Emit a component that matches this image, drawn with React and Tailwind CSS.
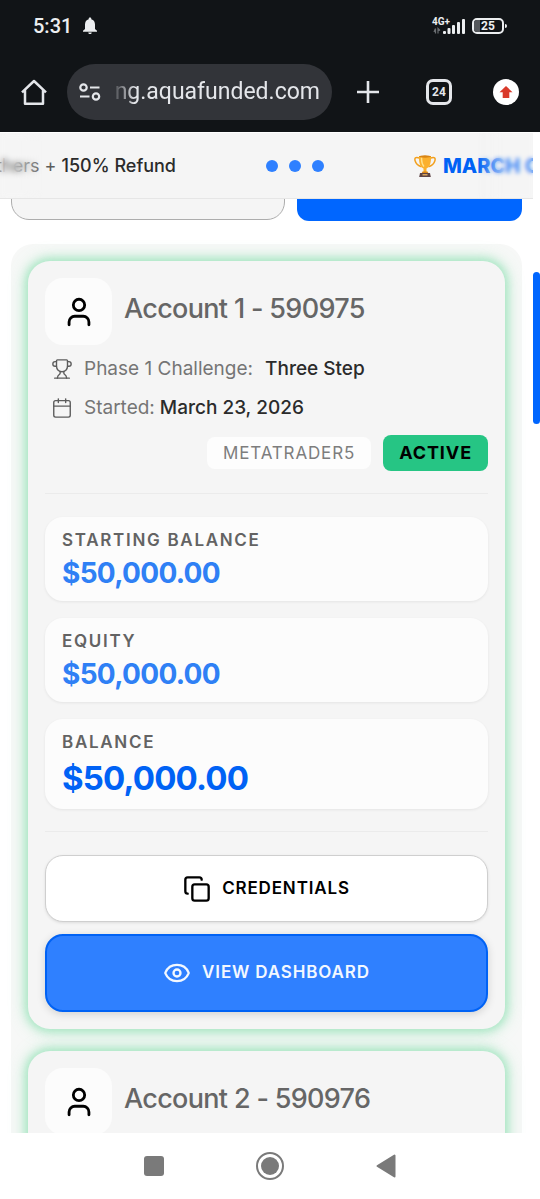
import { useState } from "react";
import { Calendar, Copy, Eye, Trophy, User } from "lucide-react";

const accounts = [
  {
    id: 1,
    login: "590975",
    challenge: "Three Step",
    started: "March 23, 2026",
    platform: "METATRADER5",
    status: "ACTIVE",
    startingBalance: "$50,000.00",
    equity: "$50,000.00",
    balance: "$50,000.00",
  },
  {
    id: 2,
    login: "590976",
    challenge: "Three Step",
    started: "March 23, 2026",
    platform: "METATRADER5",
    status: "ACTIVE",
    startingBalance: "$50,000.00",
    equity: "$50,000.00",
    balance: "$50,000.00",
  },
];

function StatusBar() {
  return (
    <div className="flex h-[52px] items-center justify-between px-[33px] text-[#eceef0]">
      <div className="flex items-center gap-[10px]">
        <span className="text-xl font-medium">5:31</span>
        <svg className="h-[18px] w-4" viewBox="0 0 16 18" fill="currentColor">
          <path d="M8 0.5c.8 0 1.3.5 1.3 1.2v.6C11.700 2.900 13 4.900 13 7.500v4.500l2 1.700v1H1v-1L3 12V7.500c0-2.600 1.300-4.600 3.700-5.200v-.6C6.700 1 7.200.5 8 .5z" />
          <path d="M6.300 15.400h3.400c0 .9-.7 1.600-1.700 1.600s-1.700-.7-1.700-1.600z" />
        </svg>
      </div>
      <div className="flex items-center gap-[7px]">
        {/* Mobile signal */}
        <div className="relative">
          <svg className="h-[18px] w-[33px]" viewBox="0 0 33 18" fill="currentColor">
            <path d="M3.500 11.500v5M2 15l1.500-3.500M6 16.500v-5l2 2" stroke="#6b6e72" strokeWidth="1.200" fill="none" />
            <rect x="11" y="14" width="3" height="3" rx="1" />
            <rect x="15.500" y="11" width="3" height="6" rx="1" />
            <rect x="20" y="8" width="3" height="9" rx="1" />
            <rect x="25" y="5" width="3" height="12" rx="1" />
            <rect x="30" y="2" width="3" height="15" rx="1" />
          </svg>
          <span className="absolute left-0 top-0 text-[10px] font-bold leading-none">4G+</span>
        </div>
        {/* Battery */}
        <div className="flex items-center gap-px">
          <div className="relative flex h-4 w-8 items-center justify-center overflow-hidden rounded-[5px] border-2 border-current">
            <span className="absolute inset-y-0 left-0 w-[6px] bg-[#55585c]" />
            <span className="relative text-xs font-bold leading-none">25</span>
          </div>
          <span className="h-1 w-[2px] rounded-r-sm bg-current" />
        </div>
      </div>
    </div>
  );
}

function BrowserBar() {
  return (
    <div className="flex h-20 items-center pl-5 pr-[21px] text-[#e4e6ea]">
      <button aria-label="Home" className="shrink-0">
        <svg className="h-7 w-7" viewBox="0 0 28 28" fill="none" stroke="currentColor" strokeWidth="2.500">
          <path d="M2 14.300 14 3l12 11.300M5 12v13.700h18V12" strokeLinejoin="round" />
        </svg>
      </button>
      <div className="ml-[19px] flex h-14 min-w-0 flex-1 items-center rounded-full bg-[#323439] px-3">
        <svg className="h-6 w-6 shrink-0" viewBox="0 0 24 24" fill="none" stroke="currentColor" strokeWidth="2.200">
          <circle cx="4.500" cy="7.500" r="3.200" />
          <path d="M11 7.500h9.500M1 16.500h9.500" />
          <circle cx="17" cy="16.500" r="3.200" />
        </svg>
        <input
          type="text"
          aria-label="Address"
          readOnly
          value="ng.aquafunded.com"
          className="ml-2 min-w-0 flex-1 bg-transparent text-right text-[23px] outline-none [mask-image:linear-gradient(to_right,transparent,black_24px)]"
        />
      </div>
      <button aria-label="New tab" className="ml-6 shrink-0">
        <svg className="h-6 w-6" viewBox="0 0 24 24" fill="none" stroke="currentColor" strokeWidth="2.600">
          <path d="M12 1v22M1 12h22" />
        </svg>
      </button>
      <button
        aria-label="Tabs"
        className="ml-[46px] flex h-[26px] w-[26px] shrink-0 items-center justify-center rounded-[7px] border-3 border-current text-xs font-bold"
      >
        24
      </button>
      <button
        aria-label="Update available"
        className="ml-[41px] flex h-[26px] w-[26px] shrink-0 items-center justify-center rounded-full bg-white"
      >
        <svg className="h-[14px] w-[14px]" viewBox="0 0 14 14" fill="#d93a2b">
          <path d="M7 1l6.500 6.200h-3.200V13H3.700V7.200H.5z" />
        </svg>
      </button>
    </div>
  );
}

function TrophyEmoji() {
  return (
    <svg className="h-[22px] w-[22px] shrink-0" viewBox="0 0 22 22">
      <path d="M5.500 3C1.500 1.500.2 3 1.200 6c.8 3 3.200 4.800 6.300 5.700M16.500 3c4-1.500 5.300 0 4.300 3-.8 3-3.200 4.800-6.300 5.700" fill="none" stroke="#f2a01e" strokeWidth="1.500" />
      <path d="M5 1h12c.3 6-1 11-4.500 12.500V17h-3v-3.500C6 12 4.700 7 5 1z" fill="#fbb02d" />
      <path d="M7.500 2.500c0 4 .5 7 2.500 9" fill="none" stroke="#ffe08a" strokeWidth="1.500" />
      <ellipse cx="11" cy="1.500" rx="6" ry="1.200" fill="#d98514" />
      <path d="M8.500 16.500h5l1 2h-7z" fill="#d98514" />
      <path d="M6 18h10l.8 4H5.200z" fill="#5d4546" />
      <rect x="8.500" y="19" width="5" height="1.500" fill="#d9a35a" />
    </svg>
  );
}

function Ticker() {
  return (
    <div className="relative z-10 flex h-[66px] shrink-0 items-center gap-[90px] overflow-hidden border-b border-[#e6e6e6] bg-[#f5f5f5] text-lg">
      <p className="flex w-[176px] shrink-0 justify-end whitespace-pre text-[#2b2b2b]">
        <span className="text-[#5c5c5c]">For Others + </span>
        <span className="font-medium">150% Refund</span>
      </p>
      <div className="flex shrink-0 gap-[11px]">
        <span className="h-3 w-3 rounded-full bg-[#2f80ff]" />
        <span className="h-3 w-3 rounded-full bg-[#2f80ff]" />
        <span className="h-3 w-3 rounded-full bg-[#2f80ff]" />
      </div>
      <div className="flex shrink-0 items-center gap-[7px]">
        <TrophyEmoji />
        <span className="whitespace-nowrap text-xl font-extrabold text-[#0062f5]">MARCH OFFER</span>
      </div>
      {/* Soft edges */}
      <div className="absolute inset-y-0 left-0 w-11 backdrop-blur-[3px] [mask-image:linear-gradient(to_right,black_30%,transparent)]" />
      <div className="absolute inset-y-0 right-0 w-14 bg-[#f5f5f5]/30 backdrop-blur-[2px] [mask-image:linear-gradient(to_left,black_50%,transparent)]" />
    </div>
  );
}

function Stat({ label, value, large }) {
  return (
    <div className="rounded-[18px] bg-[#fcfcfc] px-[17px] pb-[11px] pt-3 shadow-[0_1px_3px_rgba(0,0,0,0.07)]">
      <p className="text-[17px] font-semibold leading-[22px] tracking-widest text-[#636363]">{label}</p>
      {large ? (
        <p className="pt-[5px] text-[33px] font-bold leading-10 tracking-tight text-[#0062f5]">{value}</p>
      ) : (
        <p className="pt-[5px] text-[28px] font-bold leading-[34px] tracking-tight text-[#2f80f5]">{value}</p>
      )}
    </div>
  );
}

function AccountCard({ account }) {
  return (
    <article className="rounded-[22px] bg-[#f5f5f5] p-[17px] shadow-[0_0_8px_3px_rgba(90,215,145,0.42),0_0_18px_3px_rgba(90,215,145,0.22)]">
      <div className="flex items-center gap-3">
        <div className="flex h-[67px] w-[67px] shrink-0 items-center justify-center rounded-[18px] bg-[#fcfcfc] text-black">
          <User className="h-[34px] w-[34px]" strokeWidth={2} />
        </div>
        <h2 className="whitespace-nowrap pb-1 text-[27px] font-medium tracking-tight text-[#666]">
          Account {account.id} - {account.login}
        </h2>
      </div>

      <div className="flex flex-col gap-[15px] pl-[6px] pt-3 text-[19px] leading-6 text-[#757575]">
        <p className="flex items-center">
          <Trophy className="mr-[11px] h-[22px] w-[22px] text-[#5c5c5c]" strokeWidth={1.5} />
          Phase 1 Challenge:
          <span className="ml-3 font-medium text-[#2b2b2b]">{account.challenge}</span>
        </p>
        <p className="flex items-center">
          <Calendar className="mr-[11px] h-[22px] w-[22px] text-[#5c5c5c]" strokeWidth={1.5} />
          Started:
          <span className="ml-[5px] font-medium text-[#2b2b2b]">{account.started}</span>
        </p>
      </div>

      <div className="flex items-center justify-end gap-3 pt-[15px]">
        <span className="rounded-lg bg-[#fdfdfd] px-4 py-1 text-[17px] leading-6 tracking-wider text-[#7d7d7d]">
          {account.platform}
        </span>
        <span className="rounded-lg bg-[#26c584] px-4 py-[6px] text-lg font-bold leading-6 tracking-wider text-black">
          {account.status}
        </span>
      </div>

      <hr className="mt-[22px] border-[#ebebeb]" />

      <div className="flex flex-col gap-[17px] pb-[22px] pt-[23px]">
        <Stat label="STARTING BALANCE" value={account.startingBalance} />
        <Stat label="EQUITY" value={account.equity} />
        <Stat label="BALANCE" value={account.balance} large />
      </div>

      <hr className="border-[#ebebeb]" />

      <div className="flex flex-col gap-3 pt-[23px] text-[17px] font-semibold tracking-wider">
        <button className="flex h-[67px] items-center justify-center gap-[11px] rounded-[18px] border border-[#cfcfcf] bg-white text-black shadow-[0_1px_3px_rgba(0,0,0,0.1)]">
          <Copy className="h-7 w-7" strokeWidth={2} />
          CREDENTIALS
        </button>
        <button className="flex h-[78px] items-center justify-center gap-[11px] rounded-[18px] border-2 border-[#0062f5] bg-[#2f80ff] text-[#f3f8ff] shadow-[0_2px_8px_rgba(0,0,0,0.15)]">
          <Eye className="h-7 w-7" strokeWidth={2} />
          VIEW DASHBOARD
        </button>
      </div>
    </article>
  );
}

function SystemNav() {
  return (
    <nav className="flex h-[66px] shrink-0 items-center justify-center gap-[92px] bg-white text-[#7a7a7a]">
      <button aria-label="Recent apps" className="h-5 w-5 rounded-[3px] bg-current" />
      <button aria-label="Home screen" className="flex h-7 w-7 items-center justify-center rounded-full border-2 border-current">
        <span className="h-[18px] w-[18px] rounded-full bg-current" />
      </button>
      <button aria-label="Back">
        <svg className="h-6 w-5" viewBox="0 0 20 24" fill="currentColor" stroke="currentColor" strokeWidth="2" strokeLinejoin="round">
          <path d="M1.500 12 18.500 1.500v21z" />
        </svg>
      </button>
    </nav>
  );
}

function App() {
  const [query, setQuery] = useState("");

  return (
    <div className="flex h-screen flex-col overflow-hidden bg-white font-['Inter',sans-serif]">
      <header className="shrink-0 bg-[#111417] font-['Roboto',sans-serif]">
        <StatusBar />
        <BrowserBar />
      </header>

      <main className="flex min-h-0 flex-1">
        <div className="flex min-w-0 flex-1 flex-col overflow-hidden pt-px">
          <Ticker />

          {/* Search row, scrolled partly under the ticker */}
          <div className="-mt-11 grid shrink-0 grid-cols-[274fr_225fr] items-start gap-3 px-[11px]">
            <input
              type="text"
              aria-label="Search accounts"
              placeholder="Search my accounts (e.g."
              value={query}
              onChange={(e) => setQuery(e.target.value)}
              className="h-[65px] w-full min-w-0 rounded-[18px] border border-[#adadad] bg-[#f5f5f5] px-[17px] text-[19px] placeholder:text-[#9a9a9a]"
            />
            <button className="h-[66px] rounded-xl bg-[#0066ff] text-[17px] font-semibold text-white">SEARCH</button>
          </div>

          <section className="mx-[11px] mt-[23px] flex shrink-0 flex-col gap-[22px] rounded-[22px] bg-[#f7f8f7] p-[17px]">
            {accounts.map((account) => (
              <AccountCard key={account.id} account={account} />
            ))}
          </section>
        </div>

        {/* Scrollbar */}
        <div className="w-[7px] shrink-0">
          <div className="mt-[140px] h-[152px] rounded-full bg-[#0066ff]" />
        </div>
      </main>

      <SystemNav />
    </div>
  );
}

export default App;
